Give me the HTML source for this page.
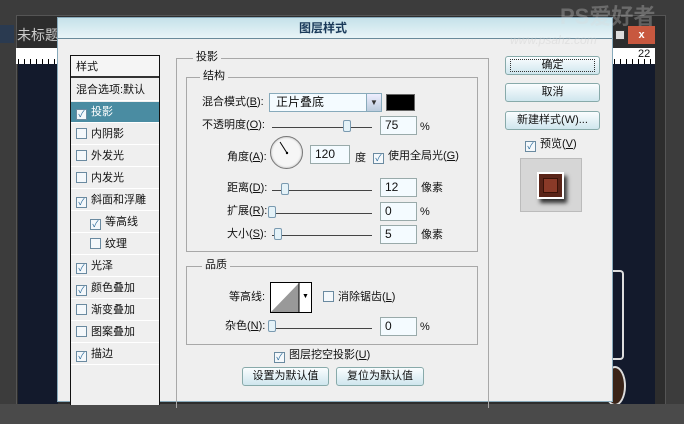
<!DOCTYPE html>
<html><head><meta charset="utf-8"><style>
*{margin:0;padding:0;box-sizing:border-box}
body{width:684px;height:424px;overflow:hidden;background:#3c3c3c;font-family:"Liberation Sans","Noto Sans CJK SC",sans-serif;font-size:11px;color:#111;position:relative}
.a{position:absolute}
.t{position:absolute;white-space:nowrap;font-size:11px;line-height:13px}
.li{position:absolute;left:71px;width:88px;height:21px;border-bottom:1px solid #fff;font-size:11px;line-height:21px;padding-left:5px}
.cb{display:inline-block;width:11px;height:11px;border:1px solid #6a8aa0;background:#f4f8fb;vertical-align:-2px;margin-right:4px;position:relative;font-size:9px;line-height:9px;color:#2a6a9a;text-align:center}
.inp{position:absolute;height:19px;border:1px solid #9aa;background:#f4fbff;font-size:12px;line-height:17px;padding-left:4px}
.sl{position:absolute;height:1px;background:#444}
.th{position:absolute;width:8px;height:12px;border:1px solid #7a9ab0;background:#e4f2f8;border-radius:2px}
.btn{position:absolute;height:19px;border:1px solid #8aa;border-radius:3px;background:linear-gradient(#fafdff,#cfe6ee);text-align:center;line-height:17px;font-size:11px}
.grp{position:absolute;border:1px solid #a8a8a8}
.gl{position:absolute;background:#efefef;padding:0 3px;font-size:11px;line-height:13px}
.tick{position:absolute;height:16px;background:repeating-linear-gradient(90deg,#000 0 1px,transparent 1px 6px);clip-path:inset(11px 0 0 0)}
</style></head><body>
<!-- doc window -->
<div class="a" style="left:16px;top:15px;width:650px;height:395px;background:#2d2d2d;border:1px solid #555"></div>
<div class="a" style="left:0;top:25px;width:14px;height:18px;background:#2a3a50"></div>
<div class="t" style="left:17px;top:26px;font-size:14px;line-height:18px;color:#ccc">未标题</div>
<div class="a" style="left:16px;top:48px;width:42px;height:16px;background:#fff"></div>
<div class="tick" style="left:18px;top:48px;width:40px"></div>
<div class="a" style="left:18px;top:64px;width:40px;height:346px;background:#131a2c"></div>
<div class="a" style="left:612px;top:48px;width:43px;height:16px;background:#fff"></div>
<div class="tick" style="left:614px;top:48px;width:41px"></div>
<div class="t" style="left:638px;top:48px;font-size:11px">22</div>
<div class="a" style="left:612px;top:64px;width:43px;height:346px;background:#131a2c"></div>
<div class="a" style="left:612px;top:270px;width:12px;height:90px;border:2px solid #ddd;border-left:none;border-radius:0 4px 4px 0"></div>
<div class="a" style="left:604px;top:366px;width:22px;height:40px;border:2px solid #ddd;border-radius:50%;background:#3a2418"></div>
<div class="a" style="left:615px;top:30px;width:10px;height:10px;border:1px solid #333;background:#ddd"></div>
<div class="a" style="left:628px;top:26px;width:27px;height:18px;background:#c8583f;color:#fff;text-align:center;font-weight:bold;line-height:18px">x</div>
<div class="a" style="left:0;top:404px;width:684px;height:20px;background:#4a4a4a"></div>
<!-- dialog -->
<div class="a" style="left:57px;top:17px;width:556px;height:385px;background:#efefef;border:1px solid #8ab"></div>
<div class="a" style="left:58px;top:18px;width:554px;height:21px;background:linear-gradient(#c5e2ea,#e9f4f7);border-bottom:1px solid #6a8a9a"></div>
<div class="t" style="left:299px;top:22px;font-size:12px;font-weight:bold;color:#1a3a5a">图层样式</div>
<div class="t" style="left:560px;top:4px;font-size:22px;line-height:26px;color:rgba(220,220,220,.3);font-weight:bold">PS爱好者</div>
<div class="t" style="left:510px;top:34px;font-size:12px;color:rgba(200,200,200,.35);font-style:italic">www.psahz.com</div>
<!-- list -->
<div class="a" style="left:70px;top:55px;width:90px;height:350px;border:1px solid #111;border-bottom:none;background:#efefef"></div>
<div class="a" style="left:71px;top:56px;width:88px;height:22px;background:#f5f5f5;border-bottom:2px solid #333"></div>
<div class="t" style="left:76px;top:61px">样式</div>
<div class="li" style="top:80px">混合选项:默认</div>
<div class="li" style="top:102px;background:#4a8ca2;color:#fff"><span class="cb">✓</span>投影</div>
<div class="li" style="top:124px"><span class="cb"></span>内阴影</div>
<div class="li" style="top:146px"><span class="cb"></span>外发光</div>
<div class="li" style="top:168px"><span class="cb"></span>内发光</div>
<div class="li" style="top:190px"><span class="cb">✓</span>斜面和浮雕</div>
<div class="li" style="top:212px;padding-left:19px"><span class="cb">✓</span>等高线</div>
<div class="li" style="top:234px;padding-left:19px"><span class="cb"></span>纹理</div>
<div class="li" style="top:256px"><span class="cb">✓</span>光泽</div>
<div class="li" style="top:278px"><span class="cb">✓</span>颜色叠加</div>
<div class="li" style="top:300px"><span class="cb"></span>渐变叠加</div>
<div class="li" style="top:322px"><span class="cb"></span>图案叠加</div>
<div class="li" style="top:344px"><span class="cb">✓</span>描边</div>
<!-- groups -->
<div class="grp" style="left:176px;top:58px;width:313px;height:350px;border-bottom:none"></div>
<div class="gl" style="left:193px;top:51px">投影</div>
<div class="grp" style="left:186px;top:77px;width:292px;height:175px"></div>
<div class="gl" style="left:200px;top:70px">结构</div>
<div class="t" style="left:202px;top:96px">混合模式(<u>B</u>):</div>
<div class="a" style="left:269px;top:93px;width:113px;height:19px;border:1px solid #8ab;background:#f4fbff;font-size:12px;line-height:17px;padding-left:6px">正片叠底</div>
<div class="a" style="left:366px;top:94px;width:15px;height:17px;background:linear-gradient(#eef,#bcd);border-left:1px solid #8ab;text-align:center;font-size:8px;line-height:17px;color:#333">▼</div>
<div class="a" style="left:386px;top:94px;width:29px;height:17px;background:#000;border:1px solid #666"></div>
<div class="t" style="left:202px;top:119px">不透明度(<u>O</u>):</div>
<div class="sl" style="left:272px;top:127px;width:100px"></div><div class="th" style="left:343px;top:120px"></div>
<div class="inp" style="left:380px;top:116px;width:37px">75</div><div class="t" style="left:420px;top:121px">%</div>
<div class="t" style="left:227px;top:151px">角度(<u>A</u>):</div>
<div class="a" style="left:270px;top:136px;width:33px;height:33px;border-radius:50%;border:1px solid #777;background:#f6f6f6;box-shadow:inset 0 0 2px #aaa"></div>
<svg class="a" style="left:270px;top:136px" width="33" height="33"><line x1="17" y1="17" x2="10" y2="6" stroke="#000" stroke-width="1"/><circle cx="17" cy="17" r="1.2"/></svg>
<div class="inp" style="left:310px;top:145px;width:40px">120</div>
<div class="t" style="left:355px;top:152px">度</div>
<div class="t" style="left:373px;top:150px"><span class="cb">✓</span>使用全局光(<u>G</u>)</div>
<div class="t" style="left:227px;top:182px">距离(<u>D</u>):</div>
<div class="sl" style="left:272px;top:190px;width:100px"></div><div class="th" style="left:281px;top:183px"></div>
<div class="inp" style="left:380px;top:178px;width:37px">12</div><div class="t" style="left:421px;top:182px">像素</div>
<div class="t" style="left:227px;top:205px">扩展(<u>R</u>):</div>
<div class="sl" style="left:272px;top:213px;width:100px"></div><div class="th" style="left:268px;top:206px"></div>
<div class="inp" style="left:380px;top:202px;width:37px">0</div><div class="t" style="left:420px;top:206px">%</div>
<div class="t" style="left:227px;top:228px">大小(<u>S</u>):</div>
<div class="sl" style="left:272px;top:235px;width:100px"></div><div class="th" style="left:274px;top:228px"></div>
<div class="inp" style="left:380px;top:225px;width:37px">5</div><div class="t" style="left:421px;top:229px">像素</div>
<div class="grp" style="left:186px;top:266px;width:292px;height:79px"></div>
<div class="gl" style="left:202px;top:259px">品质</div>
<div class="t" style="left:229px;top:291px">等高线:</div>
<svg class="a" style="left:270px;top:282px" width="42" height="31"><rect x="0.5" y="0.5" width="41" height="30" fill="#fff" stroke="#000"/><polygon points="1,30 29,1 29,30" fill="#999"/><line x1="29" y1="1" x2="29" y2="30" stroke="#000"/><text x="32" y="16" font-size="7">▼</text></svg>
<div class="t" style="left:323px;top:291px"><span class="cb"></span>消除锯齿(<u>L</u>)</div>
<div class="t" style="left:225px;top:320px">杂色(<u>N</u>):</div>
<div class="sl" style="left:272px;top:328px;width:100px"></div><div class="th" style="left:268px;top:320px"></div>
<div class="inp" style="left:380px;top:317px;width:37px">0</div><div class="t" style="left:420px;top:321px">%</div>
<div class="t" style="left:274px;top:349px"><span class="cb">✓</span>图层挖空投影(<u>U</u>)</div>
<div class="btn" style="left:242px;top:367px;width:87px">设置为默认值</div>
<div class="btn" style="left:336px;top:367px;width:88px">复位为默认值</div>
<!-- right buttons -->
<div class="btn" style="left:505px;top:56px;width:95px"><span style="border:1px dotted #333;display:block;margin:2px 4px;line-height:11px">确定</span></div>
<div class="btn" style="left:505px;top:83px;width:95px">取消</div>
<div class="btn" style="left:505px;top:111px;width:95px">新建样式(W)...</div>
<div class="t" style="left:525px;top:138px"><span class="cb">✓</span>预览(<u>V</u>)</div>
<div class="a" style="left:520px;top:158px;width:62px;height:54px;background:#d6d6d6;border:1px solid #bbb"></div>
<div class="a" style="left:537px;top:172px;width:27px;height:27px;border:2px solid #fff;background:#5a2418;box-shadow:3px 4px 4px #333"><div style="margin:4px;width:15px;height:15px;background:#8a3a28;border:1px solid #3a1208"></div></div>
</body></html>
